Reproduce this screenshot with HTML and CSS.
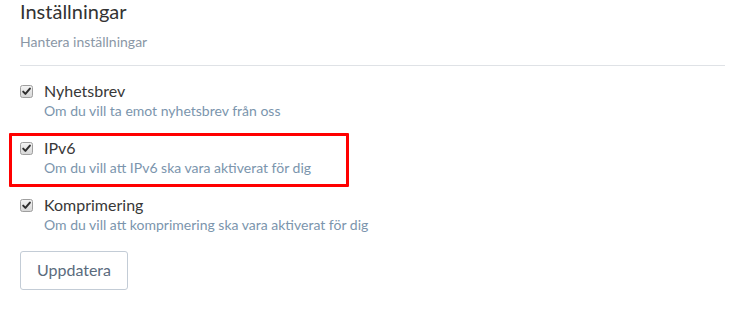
FILE: index.html
```html
<!DOCTYPE html>
<html lang="sv">
<head>
<meta charset="utf-8">
<link rel="stylesheet" href="styles.css">
</head>
<body>
<div class="panel">
  <h1 class="title">Inställningar</h1>
  <p class="subtitle">Hantera inställningar</p>
  <hr class="divider">
  <ul class="options">
    <li class="option">
      <span class="check" role="checkbox" aria-checked="true">
        <svg width="13" height="13" viewBox="0 0 13 13"><defs><linearGradient id="g1" x1="0" y1="0" x2="0" y2="1"><stop offset="0" stop-color="#f4f4f4"/><stop offset="1" stop-color="#d6d6d6"/></linearGradient></defs><rect x="0.5" y="0.5" width="12" height="12" rx="2" fill="url(#g1)" stroke="#9f9f9f"/><path d="M3.2 6.6 L5.4 8.9 L9.9 3.6" fill="none" stroke="#2f2f2f" stroke-width="2" stroke-linecap="round" stroke-linejoin="round"/></svg>
      </span>
      <div class="text">
        <div class="label">Nyhetsbrev</div>
        <div class="desc">Om du vill ta emot nyhetsbrev från oss</div>
      </div>
    </li>
    <li class="option highlight">
      <span class="check" role="checkbox" aria-checked="true">
        <svg width="13" height="13" viewBox="0 0 13 13"><rect x="0.5" y="0.5" width="12" height="12" rx="2" fill="url(#g1)" stroke="#9f9f9f"/><path d="M3.2 6.6 L5.4 8.9 L9.9 3.6" fill="none" stroke="#2f2f2f" stroke-width="2" stroke-linecap="round" stroke-linejoin="round"/></svg>
      </span>
      <div class="text">
        <div class="label">IPv6</div>
        <div class="desc">Om du vill att IPv6 ska vara aktiverat för dig</div>
      </div>
    </li>
    <li class="option">
      <span class="check" role="checkbox" aria-checked="true">
        <svg width="13" height="13" viewBox="0 0 13 13"><rect x="0.5" y="0.5" width="12" height="12" rx="2" fill="url(#g1)" stroke="#9f9f9f"/><path d="M3.2 6.6 L5.4 8.9 L9.9 3.6" fill="none" stroke="#2f2f2f" stroke-width="2" stroke-linecap="round" stroke-linejoin="round"/></svg>
      </span>
      <div class="text">
        <div class="label">Komprimering</div>
        <div class="desc">Om du vill att komprimering ska vara aktiverat för dig</div>
      </div>
    </li>
  </ul>
  <button class="btn" type="button">Uppdatera</button>
</div>
</body>
</html>
```
FILE: styles.css
```css
*, *::before, *::after { box-sizing: border-box; }
html, body { margin: 0; padding: 0; background: #fff; }
body { font-family: Lato, "Open Sans", sans-serif; color: #333; }
.panel { padding: 1px 21px 0 20px; }
.title { margin: 0; font-size: 20px; font-weight: 400; line-height: 20px; color: #333; }
.subtitle { margin: 12px 0 0; font-size: 14px; line-height: 18px; color: #8a97a6; }
.divider { margin: 14px 0 0; border: 0; border-top: 1px solid #dfe2e6; height: 0; }
.options { list-style: none; margin: 15px 0 0; padding: 0; display: flex; flex-direction: column; gap: 18.5px; }
.option { display: flex; align-items: flex-start; gap: 11px; position: relative; }
.check { display: block; width: 13px; height: 13px; margin-top: 4px; flex: none; }
.check svg { display: block; }
.text { display: flex; flex-direction: column; gap: 1.5px; }
.label { font-size: 16px; line-height: 19px; color: #383838; }
.desc { font-size: 14px; line-height: 18px; color: #7b95ad; }
.highlight::after { content: ""; position: absolute; left: -11px; top: -5px; width: 340px; height: 54px; border: 3px solid #f00; border-radius: 1px; pointer-events: none; }
.btn { display: block; margin-top: 17px; font-family: inherit; font-size: 16px; color: #5a6b7d; background: #fff; border: 1px solid #c3ccd6; border-radius: 3px; width: 108px; height: 39px; padding: 0 0 2px; }
```
